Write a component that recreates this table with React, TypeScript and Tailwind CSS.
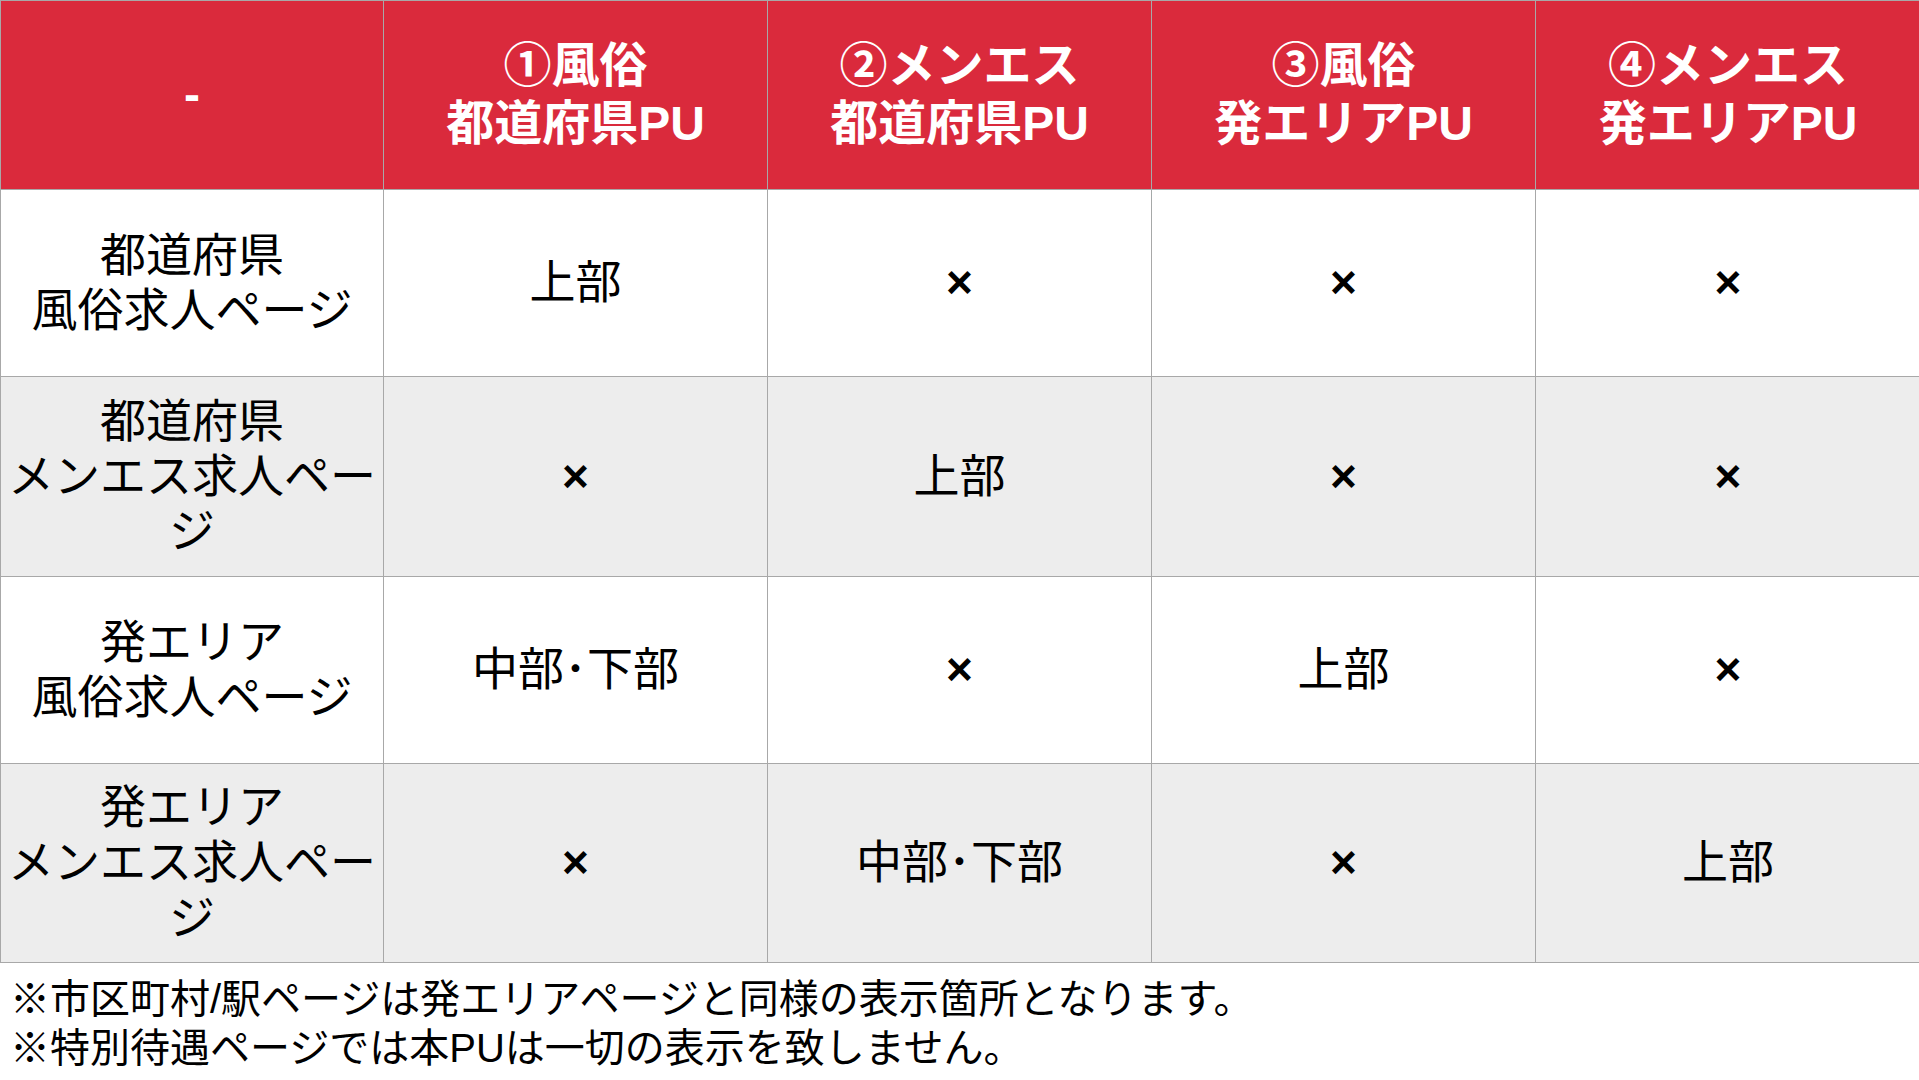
import React from "react";

const font = { fontFamily: '"Liberation Sans", "Noto Sans CJK JP", sans-serif' };

type Row = { label: React.ReactNode; cells: string[]; h: string; gray: boolean };

const rows: Row[] = [
  {
    label: (<>都道府県<br />風俗求人ページ</>),
    cells: ["上部", "×", "×", "×"],
    h: "h-[187px]",
    gray: false,
  },
  {
    label: (<>都道府県<br />メンエス求人ページ</>),
    cells: ["×", "上部", "×", "×"],
    h: "h-[200px]",
    gray: true,
  },
  {
    label: (<>発エリア<br />風俗求人ページ</>),
    cells: ["中部･下部", "×", "上部", "×"],
    h: "h-[187px]",
    gray: false,
  },
  {
    label: (<>発エリア<br />メンエス求人ページ</>),
    cells: ["×", "中部･下部", "×", "上部"],
    h: "h-[199px]",
    gray: true,
  },
];

const headers: React.ReactNode[] = [
  "-",
  (<>①風俗<br />都道府県PU</>),
  (<>②メンエス<br />都道府県PU</>),
  (<>③風俗<br />発エリアPU</>),
  (<>④メンエス<br />発エリアPU</>),
];

export default function App() {
  return (
    <div className="w-[1919px] h-[1080px] bg-white text-black overflow-hidden" style={font}>
      <table className="border-collapse table-fixed w-[1920px]">
        <colgroup>
          <col className="w-[383px]" />
          <col className="w-[384px]" />
          <col className="w-[384px]" />
          <col className="w-[384px]" />
          <col className="w-[385px]" />
        </colgroup>
        <thead>
          <tr className="h-[189px] bg-[#da2a3c]">
            {headers.map((h, i) => (
              <th
                key={i}
                className="border border-[#a8a8a8] text-white font-bold text-[48px] leading-[1.2] text-center align-middle px-1"
              >
                {h}
              </th>
            ))}
          </tr>
        </thead>
        <tbody>
          {rows.map((r, i) => (
            <tr key={i} className={`${r.h} ${r.gray ? "bg-[#ededed]" : "bg-white"}`}>
              <td className="border border-[#a8a8a8] text-[46px] leading-[1.2] text-center align-middle px-[6px]">
                {r.label}
              </td>
              {r.cells.map((c, j) => (
                <td
                  key={j}
                  className={`border border-[#a8a8a8] text-[46px] leading-[1.2] text-center align-middle px-1 ${c === "×" ? "font-bold" : ""}`}
                >
                  {c}
                </td>
              ))}
            </tr>
          ))}
        </tbody>
      </table>
      <div className="pt-[12px] pl-[10px] text-[40px] leading-[49px]">
        <p>※市区町村/駅ページは発エリアページと同様の表示箇所となります。</p>
        <p>※特別待遇ページでは本PUは一切の表示を致しません。</p>
      </div>
    </div>
  );
}
